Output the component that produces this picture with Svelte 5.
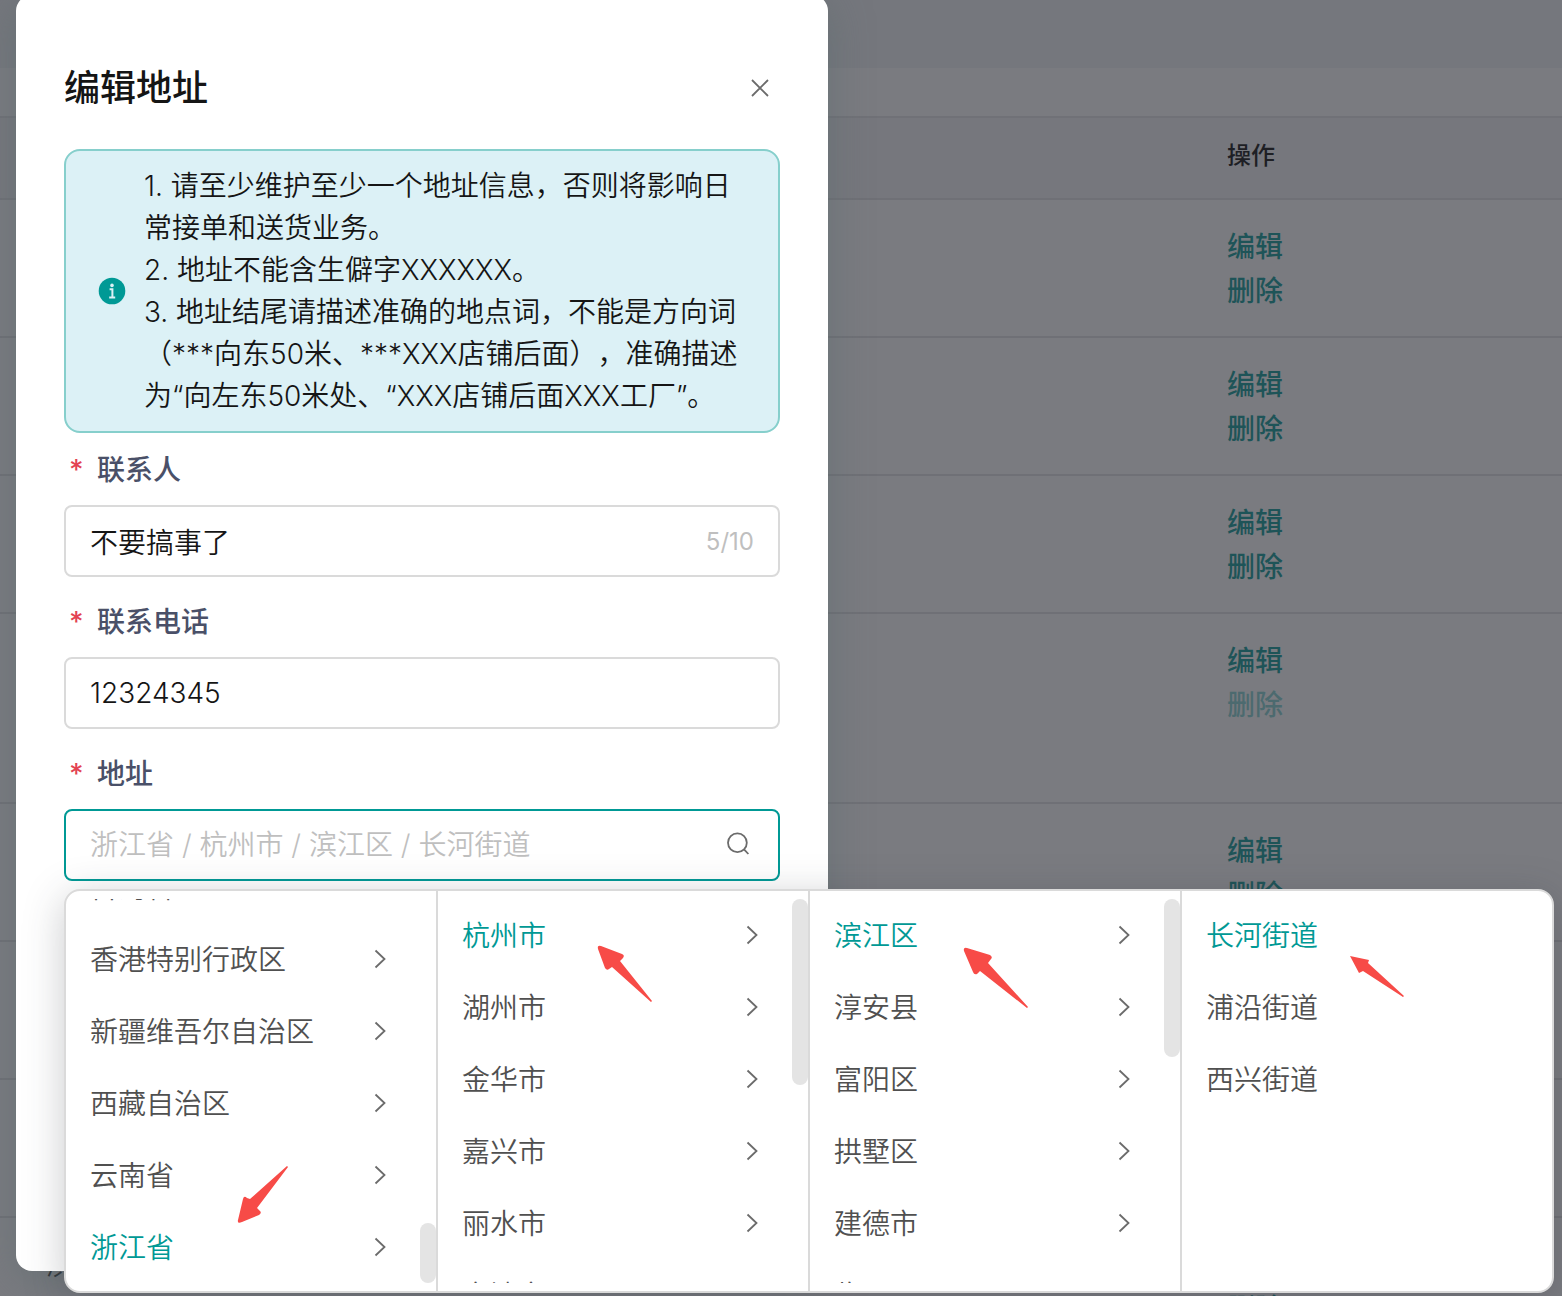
<script lang="ts">
  type Row = { label?: string; tall?: boolean; locked?: boolean };
  type Level = { options: string[]; active: string; scrolled?: boolean; thumb?: [number, number]; leaf?: boolean };

  const rows: Row[] = [{}, {}, {}, { tall: true, locked: true }, {}, {}, {}, { label: '滨' }];

  const levels: Level[] = [
    {
      options: ['台湾省', '香港特别行政区', '新疆维吾尔自治区', '西藏自治区', '云南省', '浙江省'],
      active: '浙江省',
      scrolled: true,
      thumb: [324, 60],
    },
    {
      options: ['杭州市', '湖州市', '金华市', '嘉兴市', '丽水市', '宁波市'],
      active: '杭州市',
      thumb: [0, 186],
    },
    {
      options: ['滨江区', '淳安县', '富阳区', '拱墅区', '建德市', '临平区'],
      active: '滨江区',
      thumb: [0, 158],
    },
    { options: ['长河街道', '浦沿街道', '西兴街道'], active: '长河街道', leaf: true },
  ];

  let contact = $state('不要搞事了');
  let phone = $state('12324345');
  let keyword = $state('');

  // Start a scrolled column at its last option.
  function scrollList(node: HTMLElement, scrolled: boolean | undefined) {
    if (scrolled) node.scrollTop = node.scrollHeight;
  }
</script>

<div class="page">
  <div class="toolbar"></div>
  <div class="spacer"></div>
  <table>
    <thead>
      <tr><th class="main-col"></th><th>操作</th></tr>
    </thead>
    <tbody>
      {#each rows as row}
        <tr class:tall={row.tall}>
          <td class="main-col">{row.label ?? ''}</td>
          <td>
            <div class="actions">
              <button type="button">编辑</button>
              <button type="button" disabled={row.locked}>删除</button>
            </div>
          </td>
        </tr>
      {/each}
    </tbody>
  </table>

  <div class="mask">
    <div class="modal" role="dialog" aria-labelledby="modal-title">
      <header>
        <h2 id="modal-title">编辑地址</h2>
        <button type="button" class="close" aria-label="关闭">
          <svg width="20" height="20" viewBox="0 0 20 20"><path d="M2 1l16 16M18 1L2 17" /></svg>
        </button>
      </header>

      <div class="notice">
        <svg class="info" width="28" height="28" viewBox="0 0 28 28">
          <circle cx="14" cy="14" r="13.3" fill="#009995" />
          <circle cx="14" cy="8.4" r="1.8" fill="#dcf1f6" />
          <path d="M11.6 12.2h2.8v8.2M11.2 20.4h6" fill="none" stroke="#dcf1f6" stroke-width="2" />
        </svg>
        <div class="notice-text">
          <p>1. 请至少维护至少一个地址信息，否则将影响日常接单和送货业务。</p>
          <p>2. 地址不能含生僻字XXXXXX。</p>
          <p>3. 地址结尾请描述准确的地点词，不能是方向词（***向东50米、***XXX店铺后面），准确描述为“向左东50米处、“XXX店铺后面XXX工厂”。</p>
        </div>
      </div>

      <form>
        <div class="field">
          <label for="contact"><i>*</i>联系人</label>
          <div class="box">
            <input id="contact" maxlength="10" bind:value={contact} />
            <span class="count">{contact.length}/10</span>
          </div>
        </div>
        <div class="field">
          <label for="phone"><i>*</i>联系电话</label>
          <div class="box">
            <input id="phone" bind:value={phone} />
          </div>
        </div>
        <div class="field">
          <label for="region"><i>*</i>地址</label>
          <div class="box open">
            <input id="region" placeholder="浙江省 / 杭州市 / 滨江区 / 长河街道" bind:value={keyword} />
            <svg class="search" width="28" height="28" viewBox="0 0 28 28">
              <circle cx="11.4" cy="11.8" r="9.4" />
              <path d="M18 18.4l4.4 4.6" />
            </svg>

            <div class="cascader">
              {#each levels as level}
                <div class="level">
                  <ul use:scrollList={level.scrolled}>
                    {#each level.options as name}
                      <li>
                        <button type="button" class="option" class:active={name === level.active}>
                          <span>{name}</span>
                          {#if !level.leaf}
                            <svg width="12" height="20" viewBox="0 0 12 20"><path d="M1.5 1.5l9 8.5-9 8.5" /></svg>
                          {/if}
                        </button>
                      </li>
                    {/each}
                  </ul>
                  {#if level.thumb}
                    <div class="thumb" style="top:{level.thumb[0] + 8}px;height:{level.thumb[1]}px"></div>
                  {/if}
                </div>
              {/each}

              <!-- hand-drawn markers next to the chosen options -->
              <svg class="marker m1" width="52" height="58" viewBox="0 0 52 58">
                <path d="M1 54L6 33q1-4 4-1l3 1L50 0l1 1L20 42l3 3q2 2-1 4L5 56q-5 2-4-2z" />
              </svg>
              <svg class="marker m2" width="56" height="58" viewBox="0 0 56 58">
                <path d="M1 4Q0 0 4 1l21 8q3 1 1 4l-3 3 32 40-1 1L15 22l-3 2q-2 2-4-1z" />
              </svg>
              <svg class="marker m3" width="66" height="62" viewBox="0 0 66 62">
                <path d="M1 4Q0 0 4 1l23 7q3 2 1 4l-3 4 40 44-1 1L17 24l-3 3q-3 1-4-2z" />
              </svg>
              <svg class="marker m4" width="56" height="42" viewBox="0 0 56 42">
                <path d="M0 0l19 4-1 3 36 33-1 1L13 15l-2 1-2 1z" />
              </svg>
            </div>
          </div>
        </div>
      </form>
    </div>
  </div>
</div>

<style>
  :global(body) {
    margin: 0;
  }
  .page {
    position: relative;
    height: 100vh;
    overflow: hidden;
    background: #fff;
    font-family: Inter, 'Noto Sans CJK SC', sans-serif;
    font-size: 28px;
    font-weight: 350;
    color: #151515;
    text-spacing-trim: space-all;
  }
  .toolbar {
    height: 68px;
    background: #f2f3f5;
  }
  .spacer {
    height: 48px;
  }
  button,
  input {
    font: inherit;
    color: inherit;
    border: 0;
    padding: 0;
    background: none;
  }

  table {
    width: 100%;
    border-collapse: separate;
    border-spacing: 0;
    table-layout: fixed;
  }
  th,
  td {
    box-sizing: border-box;
    padding: 0;
    text-align: left;
    border-bottom: 2px solid #dfe0e3;
  }
  th {
    height: 84px;
    padding-bottom: 10px;
    border-top: 2px solid #e3e4e6;
    background: #f4f4f5;
    font-size: 24px;
    font-weight: 500;
    color: #000;
  }
  td {
    height: 138px;
    padding-top: 25px;
    vertical-align: top;
    line-height: 44px;
  }
  .tall td {
    height: 190px;
  }
  .main-col {
    width: 1227px;
    padding-left: 46px;
  }
  .actions {
    display: flex;
    flex-direction: column;
    align-items: flex-start;
  }
  .actions button {
    line-height: 44px;
    font-weight: 500;
    color: #009390;
  }
  .actions button:disabled {
    color: #7fd0cf;
  }

  .mask {
    position: absolute;
    inset: 0;
    background: rgba(47, 48, 56, 0.64);
  }
  .modal {
    box-sizing: border-box;
    width: 812px;
    height: calc(100% - 20px);
    margin: -5px 0 0 16px;
    padding: 66px 48px 0;
    border-radius: 16px;
    background: #fff;
    box-shadow: 0 8px 40px rgba(88, 106, 108, 0.5);
  }
  header {
    display: flex;
    align-items: center;
    justify-content: space-between;
    padding-right: 10px;
    margin-bottom: 33px;
  }
  h2 {
    margin: 0;
    font-size: 36px;
    line-height: 55px;
    font-weight: 500;
  }
  .close {
    display: flex;
  }
  .close svg,
  .search,
  .option svg {
    fill: none;
    stroke: #6b6b6b;
    stroke-width: 1.8;
  }

  .notice {
    display: flex;
    align-items: center;
    gap: 18px;
    padding: 14px 32px;
    border: 2px solid #86cfcc;
    border-radius: 16px;
    background: #dcf1f6;
  }
  .info {
    flex: none;
  }
  .notice p {
    margin: 0;
    line-height: 42px;
  }

  label {
    display: block;
    padding: 15px 0 13px;
    line-height: 44px;
    font-weight: 500;
    color: #4a5068;
  }
  label i {
    display: inline-block;
    width: 28px;
    margin-left: 5px;
    font-style: normal;
    color: #e34352;
  }
  .field + .field {
    margin-top: 8px;
  }
  .box {
    position: relative;
    display: flex;
    align-items: center;
    height: 68px;
    padding: 0 24px;
    border: 2px solid #dadada;
    border-radius: 8px;
  }
  .box input {
    flex: 1;
    min-width: 0;
    height: 44px;
    outline: none;
  }
  .box input::placeholder {
    color: #bfbfbf;
    opacity: 1;
  }
  .count {
    font-size: 24px;
    font-weight: 400;
    color: #bfbfbf;
  }
  .open {
    border-color: #009995;
  }

  .cascader {
    position: absolute;
    top: calc(100% + 10px);
    left: -2px;
    display: flex;
    border: 2px solid #dadada;
    border-radius: 16px;
    background: #fff;
    box-shadow: 0 8px 40px rgba(50, 56, 60, 0.26);
  }
  .level {
    position: relative;
    box-sizing: border-box;
    width: 372px;
    padding: 8px 0;
    border-right: 2px solid #dadada;
  }
  .level:nth-child(4) {
    width: 370px;
    border-right: 0;
  }
  ul {
    height: 384px;
    margin: 0;
    padding: 0;
    overflow: hidden;
    list-style: none;
  }
  .option {
    display: flex;
    align-items: center;
    justify-content: space-between;
    width: 100%;
    height: 72px;
    padding: 0 50px 0 24px;
    line-height: 44px;
    color: #505050;
  }
  .option span {
    padding-top: 2px;
  }
  .option.active {
    color: #009995;
  }
  .thumb {
    position: absolute;
    right: 0;
    width: 16px;
    border-radius: 8px;
    background: #e4e4e4;
  }
  .marker {
    position: absolute;
    fill: #f74b47;
  }
  .m1 {
    left: 171px;
    top: 275px;
  }
  .m2 {
    left: 531px;
    top: 54px;
  }
  .m3 {
    left: 897px;
    top: 56px;
  }
  .m4 {
    left: 1284px;
    top: 65px;
  }
</style>
